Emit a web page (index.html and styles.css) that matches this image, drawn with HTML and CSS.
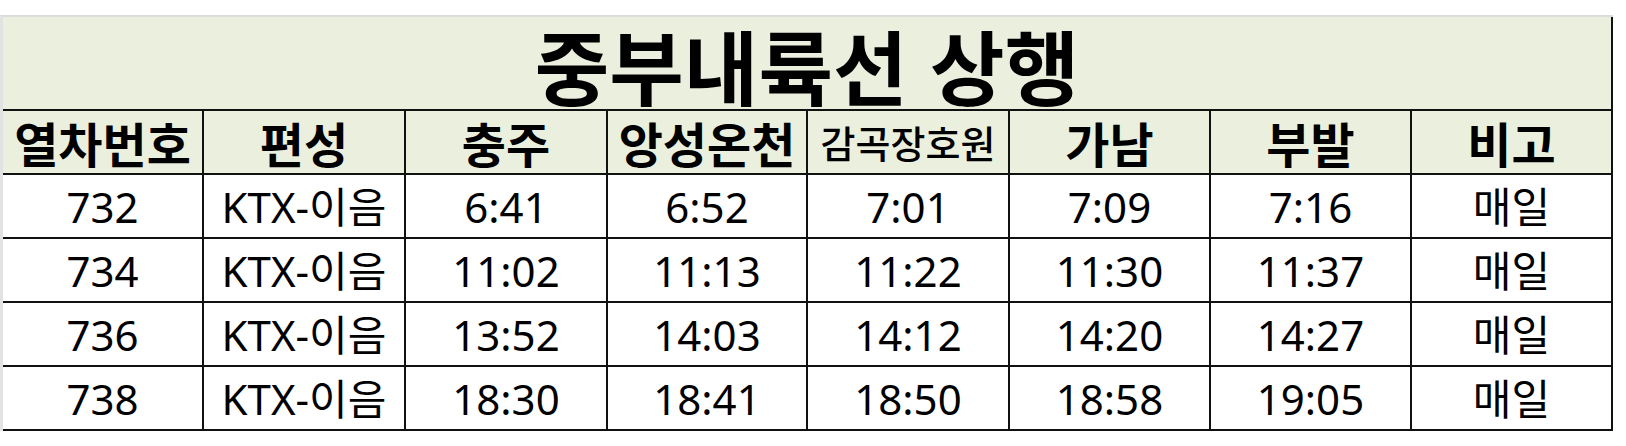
FILE: index.html
```html
<!DOCTYPE html>
<html lang="ko">
<head>
<meta charset="utf-8">
<title>중부내륙선 상행</title>
<link rel="stylesheet" href="styles.css">
</head>
<body>
<div class="sheet">
  <div class="grid">
    <div class="cell title">중부내륙선 상행</div>

    <div class="cell head">열차번호</div>
    <div class="cell head">편성</div>
    <div class="cell head">충주</div>
    <div class="cell head">앙성온천</div>
    <div class="cell head small">감곡장호원</div>
    <div class="cell head">가남</div>
    <div class="cell head">부발</div>
    <div class="cell head">비고</div>

    <div class="cell">732</div>
    <div class="cell">KTX-이음</div>
    <div class="cell">6:41</div>
    <div class="cell">6:52</div>
    <div class="cell">7:01</div>
    <div class="cell">7:09</div>
    <div class="cell">7:16</div>
    <div class="cell">매일</div>

    <div class="cell">734</div>
    <div class="cell">KTX-이음</div>
    <div class="cell">11:02</div>
    <div class="cell">11:13</div>
    <div class="cell">11:22</div>
    <div class="cell">11:30</div>
    <div class="cell">11:37</div>
    <div class="cell">매일</div>

    <div class="cell">736</div>
    <div class="cell">KTX-이음</div>
    <div class="cell">13:52</div>
    <div class="cell">14:03</div>
    <div class="cell">14:12</div>
    <div class="cell">14:20</div>
    <div class="cell">14:27</div>
    <div class="cell">매일</div>

    <div class="cell">738</div>
    <div class="cell">KTX-이음</div>
    <div class="cell">18:30</div>
    <div class="cell">18:41</div>
    <div class="cell">18:50</div>
    <div class="cell">18:58</div>
    <div class="cell">19:05</div>
    <div class="cell">매일</div>
  </div>
</div>
</body>
</html>
```

FILE: styles.css
```css
html, body {
  margin: 0;
  padding: 0;
  background: #ffffff;
}

body {
  font-family: "Noto Sans", "Noto Sans CJK KR", sans-serif;
  color: #000000;
}

.sheet {
  margin-top: 15px;
  display: inline-block;
  border-top: 2px solid #dcdcdc;
  border-left: 3px solid #e2e2e2;
}

.grid {
  display: grid;
  grid-template-columns: 201px 202px 202px 200px 202px 201px 201px 201px;
  grid-template-rows: 94px 64px 64px 64px 64px 64px;
}

.cell {
  box-sizing: border-box;
  border-right: 2px solid #111111;
  border-bottom: 2px solid #111111;
  display: flex;
  align-items: center;
  justify-content: center;
  font-size: 42px;
  line-height: 1;
  white-space: nowrap;
  padding-top: 2px;
}

.title {
  grid-column: 1 / -1;
  background: #ebf0de;
  font-family: "Noto Sans CJK KR", sans-serif;
  font-weight: 700;
  font-size: 81px;
  padding-top: 0;
}

.head {
  background: #ebf0de;
  font-family: "Noto Sans CJK KR", sans-serif;
  font-weight: 700;
  font-size: 48px;
  padding-top: 0;
}

.head.small {
  font-size: 38px;
  font-weight: 500;
}
```
